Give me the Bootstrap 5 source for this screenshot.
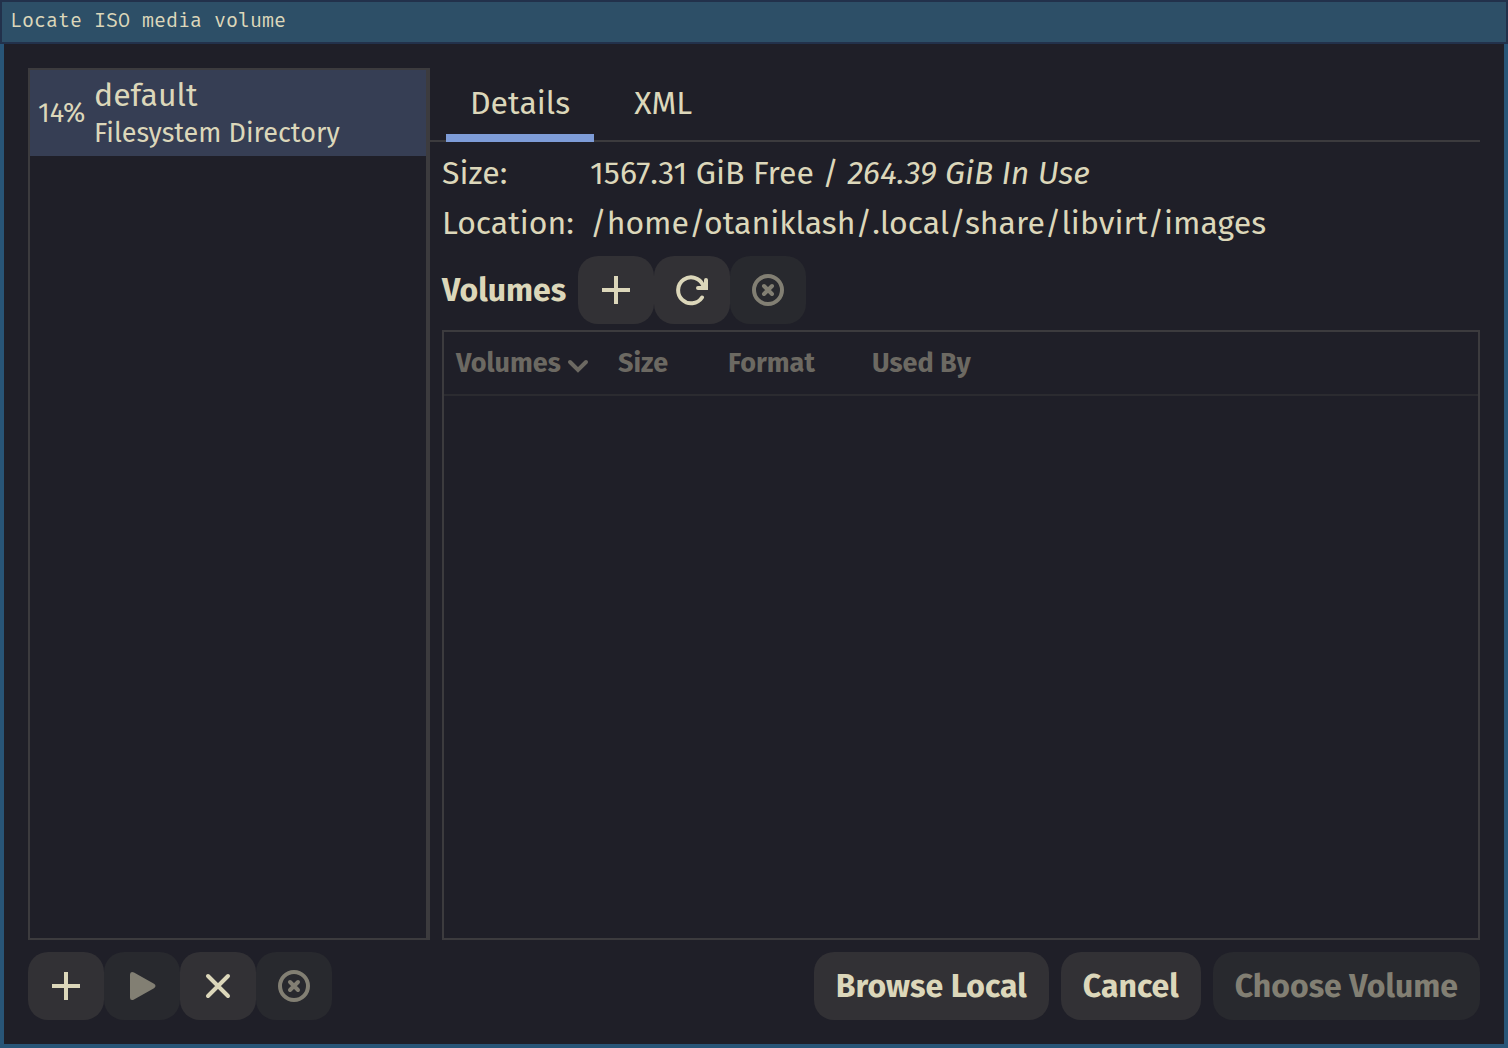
<!DOCTYPE html>
<html lang="en">
<head>
<meta charset="utf-8">
<meta name="viewport" content="width=device-width, initial-scale=1">
<title>Locate ISO media volume</title>
<link href="https://cdn.jsdelivr.net/npm/bootstrap@5.3.0/dist/css/bootstrap.min.css" rel="stylesheet">
<style>
  :root {
    --win-bg: #1f1f28;
    --fg: #dcd7ba;
    --line: #3c3b3e;
    --frame: #285577;
  }
  body { font-family: "Fira Sans", "Noto Sans", sans-serif; font-size: 32px; line-height: 40px; color: var(--fg); background: var(--win-bg); }
  .titlebar { height: 44px; padding: 0 8px; border: 2px solid #22314b; background: #2d4f67; font: 20px/36px "Fira Mono", "Liberation Mono", monospace; }
  .dialog-body { border: 4px solid var(--frame); border-top: 0; padding: 24px; gap: 12px; }
  .pool-list { width: 402px; border: 2px solid var(--line); border-right-width: 4px; border-radius: 0; }
  .pool-item { height: 86px; padding: 0 8px; gap: 8px; background: #363e54; color: var(--fg); border: 0; }
  .pool-item:hover { background: #363e54; color: var(--fg); }
  .pool-item .usage, .pool-item .kind { font-size: 27px; line-height: 36px; }
  .pool-item .usage { width: 48px; }
  .pane-tabs { height: 74px; padding-left: 16px; gap: 16px; border-bottom: 2px solid var(--line); }
  .pane-tabs .nav-link { height: 74px; padding: 4px 24px 0; background: none; color: var(--fg); border: 0; border-radius: 0; border-bottom: 8px solid transparent; }
  .pane-tabs .nav-link.active { border-bottom-color: #7e9cd8; }
  .details { padding: 6px 0 0 12px; }
  .facts { grid-template-columns: 136px 1fr; column-gap: 12px; grid-auto-rows: 50px; display: grid; align-items: center; }
  .facts dt { font-weight: 400; }
  .btn-tool, .btn-text { height: 68px; border: 0; border-radius: 20px; background: #323135; color: var(--fg); font-size: 32px; font-weight: 700; line-height: 40px; }
  .btn-tool { width: 76px; padding: 0; }
  .btn-text { padding: 0 22px; }
  .btn-tool:hover, .btn-text:hover { background: #3c3b40; color: var(--fg); }
  .btn-tool:disabled, .btn-text:disabled { background: #28292e; color: #827f73; opacity: 1; border: 0; }
  .btn-tool svg { width: 32px; height: 32px; display: block; margin: auto; }
  .toolbar-title { font-size: 32px; font-weight: 700; line-height: 40px; min-width: 136px; }
  .volumes-view { margin-top: 6px; border: 2px solid var(--line); }
  .volumes-table { table-layout: fixed; width: 100%; }
  .volumes-table th { height: 63px; padding: 0; vertical-align: middle; border-bottom: 2px solid #2b2b30; }
  .sort-btn { display: flex; align-items: center; padding: 0 12px; gap: 6px; border: 0; background: none; color: #6c6962; font-size: 27px; font-weight: 700; line-height: 36px; white-space: nowrap; }
  .sort-btn svg { margin-top: 4px; }
  .dialog-actions { gap: 12px; }
</style>
<script src="https://cdn.jsdelivr.net/npm/bootstrap@5.3.0/dist/js/bootstrap.bundle.min.js"></script>
</head>
<body>
<div class="d-flex flex-column min-vh-100">
  <header class="titlebar">Locate ISO media volume</header>
  <main class="dialog-body d-flex flex-column flex-grow-1">
    <div class="d-flex flex-grow-1">
      <aside class="pool-list list-group flex-shrink-0">
        <button type="button" class="pool-item list-group-item list-group-item-action d-flex align-items-center">
          <span class="usage">14%</span>
          <span class="d-flex flex-column">
            <span>default</span>
            <span class="kind">Filesystem Directory</span>
          </span>
        </button>
      </aside>
      <section class="d-flex flex-column flex-grow-1">
        <div class="pane-tabs nav" role="tablist">
          <button type="button" class="nav-link active" role="tab" aria-selected="true">Details</button>
          <button type="button" class="nav-link" role="tab" aria-selected="false">XML</button>
        </div>
        <div class="details d-flex flex-column flex-grow-1">
          <dl class="facts mb-0">
            <dt>Size:</dt>
            <dd class="mb-0">1567.31 GiB Free / <em>264.39 GiB In Use</em></dd>
            <dt>Location:</dt>
            <dd class="mb-0">/home/otaniklash/.local/share/libvirt/images</dd>
          </dl>
          <div class="d-flex align-items-center mt-2">
            <h2 class="toolbar-title mb-0">Volumes</h2>
            <button type="button" class="btn btn-tool" aria-label="New volume">
              <svg viewBox="0 0 32 32" stroke="currentColor" stroke-width="4"><path d="M16 2v28M2 16h28"/></svg>
            </button>
            <button type="button" class="btn btn-tool" aria-label="Refresh volume list">
              <svg viewBox="0 0 32 32" fill="none" stroke="currentColor" stroke-width="4" stroke-linecap="round"><path d="M26 23.500A13 13 0 1 1 27 11"/><path d="M30 6v8h-8"/><path d="M29 9v5h-6z" fill="currentColor" stroke="none"/></svg>
            </button>
            <button type="button" class="btn btn-tool" aria-label="Delete volume" disabled>
              <svg viewBox="0 0 32 32" fill="none" stroke="currentColor" stroke-width="4"><circle cx="16" cy="16" r="14"/><path d="M12 12l8 8M20 12l-8 8" stroke-linecap="round"/></svg>
            </button>
          </div>
          <div class="volumes-view flex-grow-1">
            <table class="volumes-table">
              <colgroup><col width="162"><col width="110"><col width="144"><col></colgroup>
              <thead>
                <tr>
                  <th scope="col" aria-sort="ascending"><button type="button" class="sort-btn">Volumes
                    <svg width="22" height="16" viewBox="0 0 22 16" fill="none" stroke="currentColor" stroke-width="4" stroke-linecap="round"><path d="M3 5l8 8 8-8"/></svg></button></th>
                  <th scope="col"><button type="button" class="sort-btn">Size</button></th>
                  <th scope="col"><button type="button" class="sort-btn">Format</button></th>
                  <th scope="col"><button type="button" class="sort-btn">Used By</button></th>
                </tr>
              </thead>
            </table>
          </div>
        </div>
      </section>
    </div>
    <footer class="d-flex justify-content-between">
      <div class="d-flex">
        <button type="button" class="btn btn-tool" aria-label="Add pool">
          <svg viewBox="0 0 32 32" stroke="currentColor" stroke-width="4"><path d="M16 2v28M2 16h28"/></svg>
        </button>
        <button type="button" class="btn btn-tool" aria-label="Start pool" disabled>
          <svg viewBox="0 0 32 32" fill="currentColor"><path d="M4 4.500Q4 2 6 2q1 0 2 .600L28 13.800q3 2.200 0 4.400L8 29.400q-1 .600-2 .600-2 0-2-2.500z"/></svg>
        </button>
        <button type="button" class="btn btn-tool" aria-label="Stop pool">
          <svg viewBox="0 0 32 32" stroke="currentColor" stroke-width="4" stroke-linecap="round"><path d="M6 6l20 20M26 6L6 26"/></svg>
        </button>
        <button type="button" class="btn btn-tool" aria-label="Delete pool" disabled>
          <svg viewBox="0 0 32 32" fill="none" stroke="currentColor" stroke-width="4"><circle cx="16" cy="16" r="14"/><path d="M12 12l8 8M20 12l-8 8" stroke-linecap="round"/></svg>
        </button>
      </div>
      <div class="dialog-actions d-flex">
        <button type="button" class="btn btn-text">Browse Local</button>
        <button type="button" class="btn btn-text">Cancel</button>
        <button type="button" class="btn btn-text" disabled>Choose Volume</button>
      </div>
    </footer>
  </main>
</div>
</body>
</html>
